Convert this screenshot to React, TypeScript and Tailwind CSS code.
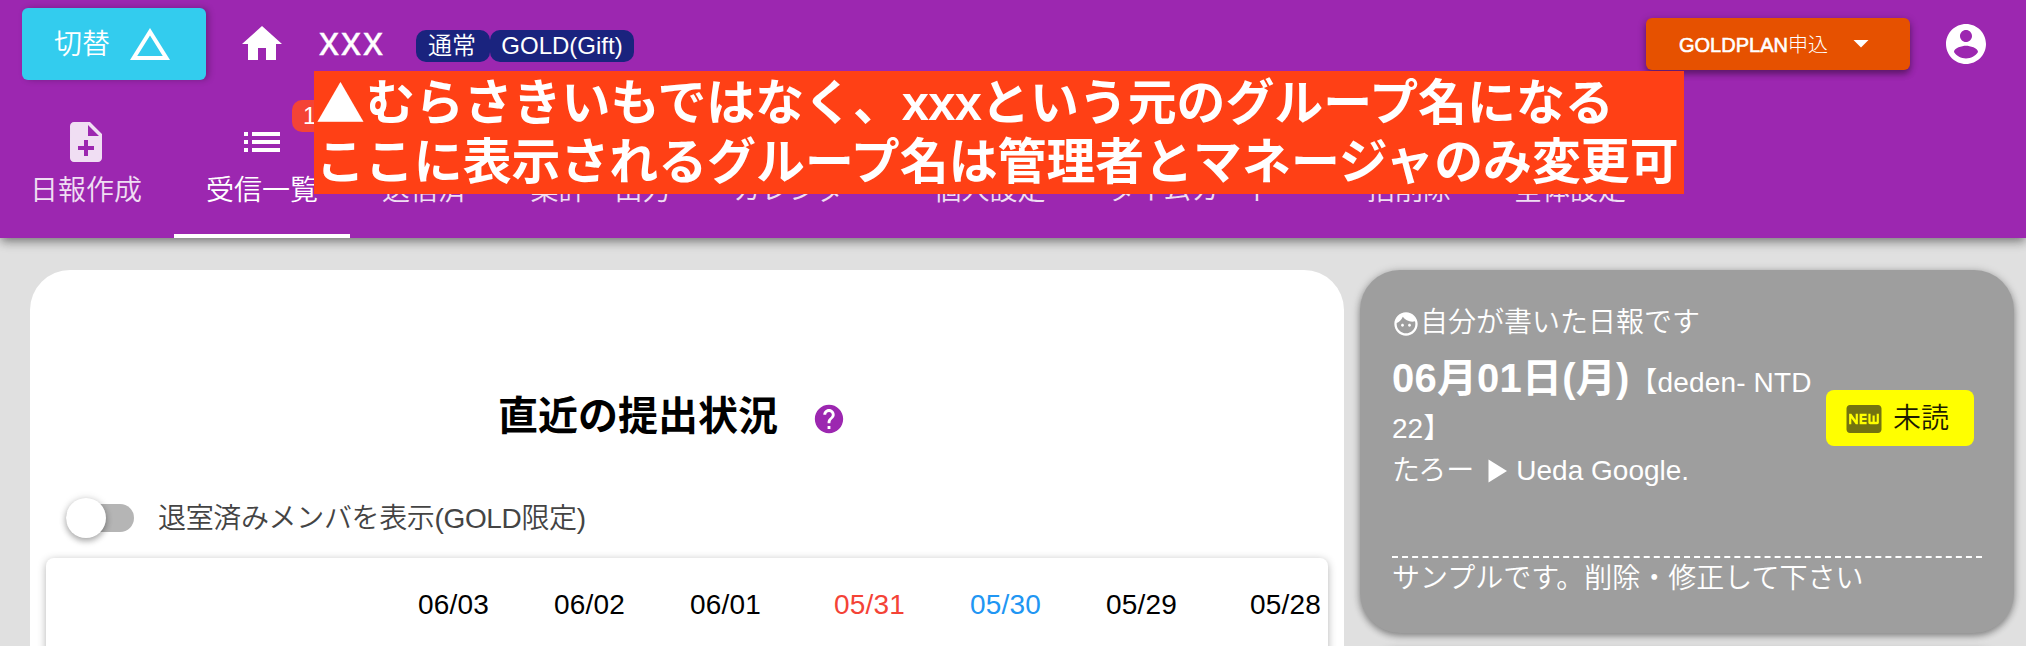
import React from "react";

const paths = {
  triangle: "M12 7.77L18.39 18H5.61L12 7.77M12 4L2 20h20L12 4z",
  home: "M10 20v-6h4v6h5v-8h3L12 3 2 12h3v8z",
  noteAdd:
    "M14 2H6c-1.1 0-1.99.9-1.99 2L4 20c0 1.1.89 2 1.99 2H18c1.1 0 2-.9 2-2V8l-6-6zm2 14h-3v3h-2v-3H8v-2h3v-3h2v3h3v2zm-3-7V3.5L18.5 9H13z",
  list: "M3 13h2v-2H3v2zm0 4h2v-2H3v2zm0-8h2V7H3v2zm4 4h14v-2H7v2zm0 4h14v-2H7v2zM7 7v2h14V7H7z",
  account:
    "M12 2C6.48 2 2 6.48 2 12s4.48 10 10 10 10-4.48 10-10S17.52 2 12 2zm0 3c1.66 0 3 1.34 3 3s-1.34 3-3 3-3-1.34-3-3 1.34-3 3-3zm0 14.2c-2.5 0-4.71-1.28-6-3.22.03-1.99 4-3.08 6-3.08 1.99 0 5.97 1.09 6 3.08-1.29 1.94-3.5 3.22-6 3.22z",
  dropDown: "M7 10l5 5 5-5z",
  help: "M12 2C6.48 2 2 6.48 2 12s4.48 10 10 10 10-4.48 10-10S17.52 2 12 2zm1 17h-2v-2h2v2zm2.07-7.75l-.9.92C13.45 12.9 13 13.5 13 15h-2v-.5c0-1.1.45-2.1 1.17-2.83l1.24-1.26c.37-.36.59-.86.59-1.41 0-1.1-.9-2-2-2s-2 .9-2 2H8c0-2.21 1.79-4 4-4s4 1.79 4 4c0 .88-.36 1.68-.93 2.25z",
  face: "M9 11.75c-.69 0-1.25.56-1.25 1.25s.56 1.25 1.25 1.25 1.25-.56 1.25-1.25-.56-1.25-1.25-1.25zm6 0c-.69 0-1.25.56-1.25 1.25s.56 1.25 1.25 1.25 1.25-.56 1.25-1.25-.56-1.25-1.25-1.25zM12 2C6.48 2 2 6.48 2 12s4.48 10 10 10 10-4.48 10-10S17.52 2 12 2zm0 18c-4.41 0-8-3.59-8-8 0-.29.02-.58.05-.86 2.36-1.05 4.23-2.98 5.21-5.37C11.07 8.33 14.05 10 17.42 10c.78 0 1.53-.09 2.25-.26.21.71.33 1.47.33 2.26 0 4.41-3.59 8-8 8z",
  fiberNew:
    "M20 4H4c-1.11 0-1.99.89-1.99 2L2 18c0 1.11.89 2 2 2h16c1.11 0 2-.89 2-2V6c0-1.11-.89-2-2-2zM8.5 15H7.3l-2.55-3.5V15H3.5V9h1.25l2.5 3.5V9H8.5v6zm5-4.74H11v1.12h2.5v1.26H11v1.11h2.5V15h-4V9h4v1.26zm7 3.74c0 .55-.45 1-1 1h-4c-.55 0-1-.45-1-1V9h1.25v4.51h1.13V9.99h1.25v3.51h1.12V9h1.25v5z",
  play: "M4.5 .5v23l18.5-11.5z",
};

function Icon({ name, className }: { name: keyof typeof paths; className: string }) {
  return (
    <svg viewBox="0 0 24 24" fill="currentColor" className={`shrink-0 ${className}`}>
      <path d={paths[name]} />
    </svg>
  );
}

const tabs = [
  { label: "送信済", width: "w-[148px]" },
  { label: "集計・出力", width: "w-[205px]" },
  { label: "カレンダー", width: "w-[200px]" },
  { label: "個人設定", width: "w-[173px]" },
  { label: "タイムカード", width: "w-[231px]" },
  { label: "一括削除", width: "w-[176px]" },
  { label: "全体設定", width: "w-[174px]" },
];

const dates = [
  { label: "06/03", style: "w-[136px] text-black" },
  { label: "06/02", style: "w-[136px] text-black" },
  { label: "06/01", style: "w-[144px] text-black" },
  { label: "05/31", style: "w-[136px] text-[#f44336]" },
  { label: "05/30", style: "w-[136px] text-[#2196f3]" },
  { label: "05/29", style: "w-[144px] text-black" },
  { label: "05/28", style: "text-black" },
];

function Header() {
  return (
    <header className="relative z-10 h-[238px] shrink-0 bg-[#9c27b0] text-white shadow-[0_4px_8px_-2px_rgba(0,0,0,0.3),0_6px_10px_rgba(0,0,0,0.12),0_2px_12px_rgba(0,0,0,0.15)]">
      <div className="flex h-[88px] items-center pl-[22px] pr-9">
        <button className="flex h-[72px] w-[184px] items-center rounded-md bg-[#33ccee] pl-8 font-[350] shadow-[3px_0_6px_rgba(0,0,0,0.25)]">
          <span className="pt-0.5">切替</span>
          <Icon name="triangle" className="ml-4 size-12" />
        </button>
        <Icon name="home" className="ml-8 size-12" />
        <span className="-mt-1.5 ml-[33px] text-[40px] leading-[48px] tracking-[2px] [-webkit-text-stroke:0.4px_white]">xxx</span>
        <div className="ml-[31px] mt-1 flex text-[24px] font-[350] leading-8">
          <span className="h-8 w-[74px] rounded-[10px] bg-[#1a237e] pl-[12px]">通常</span>
          <span className="h-8 w-[144px] rounded-[10px] bg-[#1a237e] text-center">GOLD(Gift)</span>
        </div>
        <button className="ml-auto flex h-[52px] w-[264px] items-center rounded-md bg-[#e65100] pl-[33px] text-[20px] shadow-[0_4px_6px_rgba(0,0,0,0.3),0_2px_10px_rgba(0,0,0,0.2)]">
          <span className="pt-px [-webkit-text-stroke:0.6px_white]">GOLDPLAN</span>
          <span className="pt-px font-light">申込</span>
          <Icon name="dropDown" className="-mt-0.5 ml-[15px] size-9" />
        </button>
        <Icon name="account" className="ml-8 size-12" />
      </div>
      <nav className="-ml-0.5 flex h-[150px] font-[350]">
        <div className="flex w-[176px] flex-col items-center pt-[30px] opacity-85">
          <Icon name="noteAdd" className="size-12" />
          <span className="mt-[5px] leading-10">日報作成</span>
        </div>
        <div className="relative flex w-[176px] flex-col items-center border-b-4 border-white pt-[30px]">
          <Icon name="list" className="size-12" />
          <span className="mt-[5px] leading-10">受信一覧</span>
          <span className="absolute left-[118px] top-3 h-8 w-10 rounded-[10px] bg-[#f44336] pl-[11px] text-[24px] font-normal leading-8">1</span>
        </div>
        {tabs.map((t) => (
          <div key={t.label} className={`flex shrink-0 flex-col items-center pt-[83px] leading-10 opacity-85 ${t.width}`}>
            {t.label}
          </div>
        ))}
      </nav>
      <div className="absolute left-[314px] top-[71px] h-[123px] w-[1370px] whitespace-nowrap bg-[#ff4015] pl-[2px] pt-[3px] text-[48.9px] font-bold leading-[59px]">
        <div className="flex h-[59px]">
          <span className="-mt-[3px] w-[50px] font-['Noto_Sans_CJK_JP',sans-serif]">▲</span>
          <span>むらさきいもではなく、<span className="tracking-[-0.8px]">xxx</span>という元のグループ名になる</span>
        </div>
        <div>ここに表示されるグループ名は管理者とマネージャのみ変更可</div>
      </div>
    </header>
  );
}

function StatusPanel() {
  return (
    <section className="h-[420px] w-[1314px] rounded-t-[40px] bg-white px-4">
      <div className="flex h-[228px] items-center pl-[452px] pt-[63px]">
        <h1 className="mr-[34px] text-[40px] font-bold leading-[60px] text-black">直近の提出状況</h1>
        <Icon name="help" className="mt-1.5 size-[34px] text-[#9c27b0]" />
      </div>
      <div className="flex h-[60px] items-center pb-[20px] pl-5">
        <div className="flex h-7 w-[68px] items-center rounded-full bg-[#b5b5b5]">
          <span className="size-10 shrink-0 rounded-full bg-white shadow-[0_3px_6px_rgba(0,0,0,0.3),0_0_8px_rgba(0,0,0,0.12)]" />
        </div>
        <span className="ml-6 pt-0.5 font-[350] tracking-[-0.35px] text-[#444]">退室済みメンバを表示(GOLD限定)</span>
      </div>
      <div className="flex h-[200px] w-[1282px] items-start rounded-t-lg bg-white pl-[372px] pt-[27px] leading-10 shadow-[0_2px_8px_rgba(0,0,0,0.3)]">
        {dates.map((d) => (
          <span key={d.label} className={`shrink-0 tracking-[0.2px] ${d.style}`}>{d.label}</span>
        ))}
      </div>
    </section>
  );
}

function ReportCard() {
  return (
    <article className="h-[363px] shrink-0 rounded-[40px] bg-[#9e9e9e] px-8 pt-[33px] font-[350] text-white shadow-[0_3px_6px_rgba(0,0,0,0.3),0_1px_10px_rgba(0,0,0,0.2)]">
      <div className="flex h-10 items-center">
        <Icon name="face" className="mt-0.5 size-7" />
        自分が書いた日報です
      </div>
      <div className="flex h-[213px] pt-1.5">
        <div className="w-[434px] shrink-0 whitespace-nowrap">
          <div className="h-[58px] leading-[58px]">
            <b className="text-[40px] font-bold tracking-[0.2px]">06月01日(月)</b>
            <span className="tracking-[0.15px]">【deden- NTD</span>
          </div>
          <div className="h-[43px] leading-[44px]">22】</div>
          <div className="flex h-[42px] items-center">
            <span>たろー</span>
            <Icon name="play" className="ml-[10px] mr-2 size-6" />
            Ueda Google.
          </div>
        </div>
        <div className="mt-[41px] flex h-14 w-[148px] items-center rounded-lg bg-[#ffff00] pl-[17px] text-[#1c1c00]">
          <Icon name="fiberNew" className="mr-[8px] mt-0.5 size-[42px] text-[#737310]" />
          <span className="pt-px">未読</span>
        </div>
      </div>
      <p className="w-[590px] border-t-2 border-dashed border-white pt-px leading-10">サンプルです。削除・修正して下さい</p>
    </article>
  );
}

export default function App() {
  return (
    <div className="flex h-[646px] w-[2026px] flex-col overflow-hidden bg-[#e0e0e0] font-['Liberation_Sans','Noto_Sans_CJK_JP',sans-serif] text-[28px]">
      <Header />
      <main className="flex items-start gap-4 pl-[30px] pt-8">
        <StatusPanel />
        <div className="flex w-[654px] flex-col gap-4">
          <ReportCard />
          <div className="h-20 shrink-0 rounded-[40px] bg-[#9e9e9e] shadow-[0_3px_6px_rgba(0,0,0,0.3),0_1px_10px_rgba(0,0,0,0.2)]" />
        </div>
      </main>
    </div>
  );
}
